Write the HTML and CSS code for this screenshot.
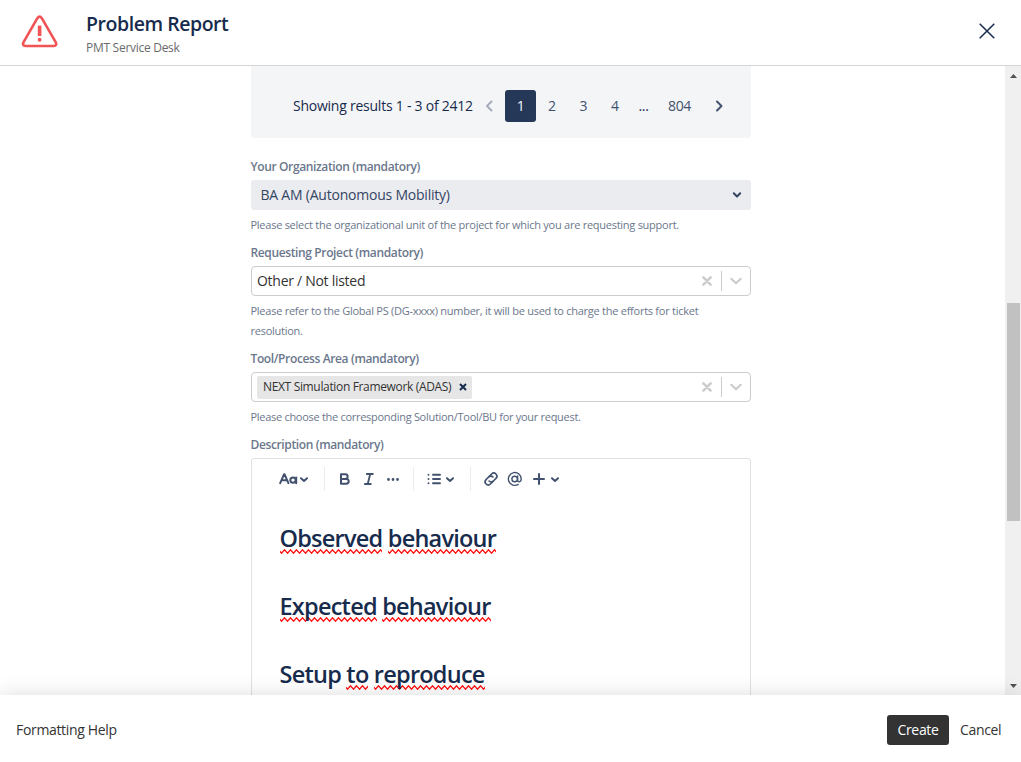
FILE: index.html
```
<!DOCTYPE html>
<html lang="en">
<head>
<meta charset="utf-8">
<title>Problem Report</title>
<link rel="stylesheet" href="styles.css">
</head>
<body>
<header class="header">
  <svg class="warning" width="38" height="34" viewBox="0 0 38 34" fill="none" stroke="#f25355" stroke-linecap="round" stroke-linejoin="round"><path stroke-width="2.600" d="M16.400 3.200Q18.600 0 20.800 3.200L34.800 27.300Q36.300 30.700 32.600 31H4.600Q.9 30.700 2.400 27.300Z"/><path stroke-width="3.600" stroke-linecap="butt" d="M18.600 10.600V21"/><path stroke-width="3.800" d="M18.600 24.700V24.800"/></svg>
  <div class="heading">
    <h1 class="title">Problem Report</h1>
    <div class="subtitle">PMT Service Desk</div>
  </div>
  <svg class="close" width="16" height="16" viewBox="0 0 16 16" stroke="#172b4d" stroke-width="1.5"><path d="M.7.7 15.300 15.300M15.300.7.7 15.300"/></svg>
</header>

<main class="viewport">
  <div class="form">
    <div class="results">
      <span class="results-text">Showing results 1 - 3 of 2412</span>
      <nav class="pages">
        <span class="page prev"><svg width="8" height="12" viewBox="0 0 8 12" fill="none" stroke="#a5adba" stroke-width="2" stroke-linecap="round" stroke-linejoin="round"><path d="M6.500 1.500 2 6l4.500 4.500"/></svg></span>
        <span class="page current">1</span>
        <span class="page">2</span>
        <span class="page">3</span>
        <span class="page">4</span>
        <span class="page dots">...</span>
        <span class="page wide">804</span>
        <span class="page next"><svg width="8" height="12" viewBox="0 0 8 12" fill="none" stroke="#42526e" stroke-width="2" stroke-linecap="round" stroke-linejoin="round"><path d="M2 1.500 6.500 6 2 10.500"/></svg></span>
      </nav>
    </div>

    <div class="field">
      <div class="label">Your Organization (mandatory)</div>
      <div class="select native"><span class="value v-org">BA AM (Autonomous Mobility)</span>
        <svg width="10" height="8" viewBox="0 0 10 8" fill="none" stroke="#344563" stroke-width="2" stroke-linecap="round" stroke-linejoin="round"><path d="M1.800 2.300 5 5.500l3.200-3.200"/></svg>
      </div>
      <div class="help">Please select the organizational unit of the project for which you are requesting support.</div>
    </div>

    <div class="field">
      <div class="label">Requesting Project (mandatory)</div>
      <div class="select"><span class="value">Other / Not listed</span>
        <span class="indicators">
          <svg width="10" height="10" viewBox="0 0 10 10" stroke="#ccc" stroke-width="2.500" stroke-linecap="round"><path d="M1.400 1.400 8.600 8.600M8.600 1.400 1.400 8.600"/></svg>
          <i class="rule"></i>
          <svg width="14" height="10" viewBox="0 0 14 10" fill="none" stroke="#ccc" stroke-width="2.200" stroke-linecap="round" stroke-linejoin="round"><path d="M2.300 2.800 7 7.300l4.700-4.500"/></svg>
        </span>
      </div>
      <div class="help">Please refer to the Global PS (DG-xxxx) number, it will be used to charge the efforts for ticket<br>resolution.</div>
    </div>

    <div class="field">
      <div class="label">Tool/Process Area (mandatory)</div>
      <div class="select"><span class="tag">NEXT Simulation Framework (ADAS)<svg width="8" height="8" viewBox="0 0 8 8" stroke="#172b4d" stroke-width="2"><path d="M1 1 7 7M7 1 1 7"/></svg></span>
        <span class="indicators">
          <svg width="10" height="10" viewBox="0 0 10 10" stroke="#ccc" stroke-width="2.500" stroke-linecap="round"><path d="M1.400 1.400 8.600 8.600M8.600 1.400 1.400 8.600"/></svg>
          <i class="rule"></i>
          <svg width="14" height="10" viewBox="0 0 14 10" fill="none" stroke="#ccc" stroke-width="2.200" stroke-linecap="round" stroke-linejoin="round"><path d="M2.300 2.800 7 7.300l4.700-4.500"/></svg>
        </span>
      </div>
      <div class="help tight">Please choose the corresponding Solution/Tool/BU for your request.</div>
    </div>

    <div class="field">
      <div class="label">Description (mandatory)</div>
      <div class="editor">
        <svg class="toolbar" width="290" height="26" viewBox="0 0 290 26" fill="none" stroke="#42526e" stroke-width="2" stroke-linecap="round" stroke-linejoin="round">
          <g><path d="M1.200 17.200 5 8.300h.6l3.800 8.900M2.700 14.300h5.200"/><circle cx="14" cy="14.100" r="2.700"/><path d="M17.200 11.400v5.800"/></g>
          <path d="m22 12.200 3 2.700 3-2.700M168 12.200l3 2.700 3-2.700M273 12.200l3 2.700 3-2.700"/>
          <path stroke="#ebecf0" stroke-width="1" stroke-linecap="butt" d="M45.500 1v24M134.500 1v24M191.500 1v24"/>
          <path d="M62 8.200h4.300a2.300 2.300 0 0 1 0 4.700H62h5.300a2.400 2.400 0 0 1 0 4.800H62Z"/>
          <path stroke-width="1.800" d="M87.800 8h6M85.800 18h6M91.200 8l-2.500 10"/>
          <path stroke-width="2.800" d="M109.500 13.500h.01M114 13.500h.01M118.500 13.500h.01"/>
          <path stroke-width="1.900" d="M149.500 8.700h.01M149.500 13h.01M149.500 17.300h.01M154 8.700h7M154 13h7M154 17.300h7"/>
          <g stroke-width="1.600" transform="rotate(-45 212 13)"><path d="M211.700 16.100h-3.600a3.100 3.100 0 0 1 0-6.200h3.600a3.100 3.100 0 0 1 3.100 3.100"/><path d="M212.300 9.900h3.600a3.100 3.100 0 0 1 0 6.200h-3.600a3.100 3.100 0 0 1-3.100-3.100"/></g>
          <g stroke-width="1.400"><circle cx="235.700" cy="13" r="2.800"/><path d="M238.600 10v4.200c0 2.200 3.600 2.200 3.600-1.200a6.400 6.400 0 1 0-3 5.400"/></g>
          <path d="M255 13h10M260 8v10"/>
        </svg>
        <h2 class="section"><span class="misspelt">Observed</span> <span class="misspelt">behaviour</span></h2>
        <h2 class="section"><span class="misspelt">Expected</span> <span class="misspelt">behaviour</span></h2>
        <h2 class="section">Setup <span class="misspelt">to</span> <span class="misspelt">reproduce</span></h2>
      </div>
    </div>
  </div>
  <div class="scrollbar">
    <svg width="7" height="4" viewBox="0 0 7 4" fill="#505050"><path d="M0 4 3.500 0 7 4Z"/></svg>
    <div class="track"><div class="thumb"></div></div>
    <svg width="7" height="4" viewBox="0 0 7 4" fill="#505050"><path d="M0 0h7L3.500 4Z"/></svg>
  </div>
</main>

<footer class="footer">
  <span class="format">Formatting Help</span>
  <button class="create">Create</button>
  <span class="cancel">Cancel</span>
</footer>
</body>
</html>
```
FILE: styles.css
```
* { box-sizing: border-box; }
body {
  margin: 0;
  width: 1021px;
  height: 762px;
  display: flex;
  flex-direction: column;
  overflow: hidden;
  background: #fff;
  color: #172b4d;
  font: 14px/20px "Open Sans", sans-serif;
  white-space: nowrap;
}
svg { flex: none; display: block; }

.header {
  flex: none;
  height: 66px;
  display: flex;
  border-bottom: 1px solid #d5d5d5;
}
.warning { margin: 15px 26px 0 21px; }
.heading { padding: 12px 0 0 1px; }
.title { margin: 0; font-size: 19.5px; line-height: 24px; font-weight: 600; letter-spacing: -0.45px; }
.subtitle { font-size: 12px; line-height: 16px; margin-top: 4px; color: #6b6b6b; letter-spacing: -0.28px; }
.close { margin: 23px 26px 0 auto; }

.viewport { flex: 1; min-height: 0; display: flex; overflow: hidden; }
.form { width: 500px; margin: 0 auto 0 251px; }
.results {
  height: 72px;
  margin-bottom: 19px;
  padding: 24px 0 0 42px;
  display: flex;
  background: #f4f5f7;
  border-radius: 0 0 3px 3px;
}
.results-text { width: 180px; line-height: 32px; letter-spacing: -0.24px; }
.pages { display: flex; line-height: 32px; color: #42526e; letter-spacing: -0.3px; }
.page { width: 31.500px; height: 32px; display: flex; align-items: center; justify-content: center; }
.prev { width: 32px; }
.next { width: 33px; }
.current { width: 31px; background: #253858; color: #f4f5f7; border-radius: 3px; }
.dots { width: 26px; color: #172b4d; }
.wide { width: 46px; }

.field { margin-bottom: 8px; }
.label { font-size: 12px; font-weight: 600; color: #6b778c; margin-bottom: 3px; margin-left: -0.500px; letter-spacing: -0.37px; }
.select {
  height: 30px;
  display: flex;
  align-items: center;
  justify-content: space-between;
  padding: 0 7px 0 5px;
  border: 1px solid #ccc;
  border-radius: 4px;
  color: #333;
}
.native { border: 0; border-radius: 3px; background: #ebecf0; color: #344563; padding: 0 9px 0 9.500px; }
.value { letter-spacing: -0.28px; }
.v-org { letter-spacing: -0.22px; }
.indicators { display: flex; align-items: center; }
.rule { width: 1px; height: 20px; background: #ccc; margin: 0 7px 0 9px; }
.tag {
  display: flex;
  align-items: center;
  justify-content: space-between;
  width: 215px;
  height: 23px;
  padding: 0 5px 0 6px;
  background: #e6e6e6;
  border-radius: 2px;
  font-size: 12px;
  letter-spacing: -0.34px;
}
.help { margin: 5px 0 0 -0.500px; font-size: 11px; color: #6b778c; letter-spacing: -0.26px; }
.tight { letter-spacing: -0.29px; }

.editor { height: 400px; border: 1px solid #dfe1e6; border-radius: 3px; padding: 7px 0 0 27px; }
.toolbar { margin-bottom: 32px; }
.section { margin: 0 0 40px; padding-left: 0.500px; font-size: 23.5px; line-height: 28px; font-weight: 600; letter-spacing: -0.76px; }
.misspelt {
  display: inline-block;
  height: 30px;
  margin-bottom: -2px;
  background: url("data:image/svg+xml,%3Csvg xmlns='http://www.w3.org/2000/svg' width='6' height='5'%3E%3Cpath d='M-1.500 .8 1.500 4.200 4.500 .8 7.500 4.200' fill='none' stroke='%23ff1010' stroke-width='1.350'/%3E%3C/svg%3E") 0 25px repeat-x;
}

.scrollbar {
  width: 16px;
  display: flex;
  flex-direction: column;
  align-items: center;
  padding: 8px 0 7px;
  background: #f0f0f0;
}
.track { flex: 1; padding-top: 225px; }
.thumb { width: 13px; height: 218px; background: #c1c1c1; }

.footer {
  position: relative;
  flex: none;
  height: 67px;
  display: flex;
  align-items: center;
  padding: 3px 20px 0 16px;
  background: #fff;
  box-shadow: 0 0 20px rgba(0, 0, 0, 0.140);
  color: #333;
}
.format { letter-spacing: -0.33px; margin-right: auto; }
.create {
  width: 62px;
  height: 30px;
  padding: 0;
  border: 0;
  border-radius: 3px;
  background: #333;
  color: #fff;
  font: inherit;
  letter-spacing: -0.300px;
}
.cancel { margin-left: 11px; width: 41px; letter-spacing: -0.350px; }
```
